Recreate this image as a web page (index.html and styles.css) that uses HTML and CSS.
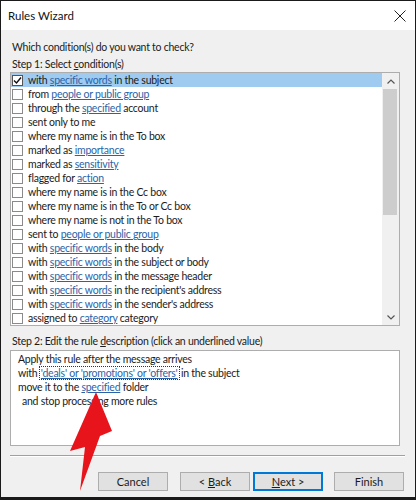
FILE: index.html
```html
<!DOCTYPE html>
<html>
<head>
<meta charset="utf-8">
<link rel="stylesheet" href="styles.css">
</head>
<body>
<div class="window">
  <div class="titlebar">
    <span class="title">Rules Wizard</span>
    <svg class="close" width="12" height="12" viewBox="0 0 12 12"><path d="M0.5 0.5 L11.5 11.5 M11.5 0.5 L0.5 11.5" stroke="#222" stroke-width="1" fill="none"/></svg>
  </div>
  <div class="body">
    <p class="prompt">Which condition(s) do you want to check?</p>
    <p class="label">Step 1: Select <u>c</u>ondition(s)</p>
    <div class="listbox">
      <ul class="items">
        <li class="item selected"><span class="cb"><svg width="9" height="9" viewBox="0 0 9 9"><path d="M1 4.5 L3.5 7 L8 1.5" stroke="#111" stroke-width="1.4" fill="none"/></svg></span><span>with <a>specific words</a> in the subject</span></li>
        <li class="item"><span class="cb"></span><span>from <a>people or public group</a></span></li>
        <li class="item"><span class="cb"></span><span>through the <a>specified</a> account</span></li>
        <li class="item"><span class="cb"></span><span>sent only to me</span></li>
        <li class="item"><span class="cb"></span><span>where my name is in the To box</span></li>
        <li class="item"><span class="cb"></span><span>marked as <a>importance</a></span></li>
        <li class="item"><span class="cb"></span><span>marked as <a>sensitivity</a></span></li>
        <li class="item"><span class="cb"></span><span>flagged for <a>action</a></span></li>
        <li class="item"><span class="cb"></span><span>where my name is in the Cc box</span></li>
        <li class="item"><span class="cb"></span><span>where my name is in the To or Cc box</span></li>
        <li class="item"><span class="cb"></span><span>where my name is not in the To box</span></li>
        <li class="item"><span class="cb"></span><span>sent to <a>people or public group</a></span></li>
        <li class="item"><span class="cb"></span><span>with <a>specific words</a> in the body</span></li>
        <li class="item"><span class="cb"></span><span>with <a>specific words</a> in the subject or body</span></li>
        <li class="item"><span class="cb"></span><span>with <a>specific words</a> in the message header</span></li>
        <li class="item"><span class="cb"></span><span>with <a>specific words</a> in the recipient's address</span></li>
        <li class="item"><span class="cb"></span><span>with <a>specific words</a> in the sender's address</span></li>
        <li class="item"><span class="cb"></span><span>assigned to <a>category</a> category</span></li>
      </ul>
      <div class="scrollbar">
        <div class="sb-btn"><svg width="8" height="5" viewBox="0 0 8 5"><path d="M0.5 4.5 L4 1 L7.5 4.5" stroke="#555" stroke-width="1.2" fill="none"/></svg></div>
        <div class="sb-track"><div class="sb-thumb"></div></div>
        <div class="sb-btn"><svg width="8" height="5" viewBox="0 0 8 5"><path d="M0.5 0.5 L4 4 L7.5 0.5" stroke="#555" stroke-width="1.2" fill="none"/></svg></div>
      </div>
    </div>
    <p class="label step2">Step 2: Edit the rule <u>d</u>escription (click an underlined value)</p>
    <div class="desc">
      <div class="line">Apply this rule after the message arrives</div>
      <div class="line">with <a class="focus">'deals' or 'promotions' or 'offers'</a> in the subject</div>
      <div class="line">move it to the <a>specified</a> folder</div>
      <div class="line indent">and stop processing more rules</div>
    </div>
    <div class="sep"></div>
    <div class="buttons">
      <button class="btn">Cancel</button>
      <button class="btn back">&lt; <u>B</u>ack</button>
      <button class="btn default"><u>N</u>ext &gt;</button>
      <button class="btn finish">Finish</button>
    </div>
  </div>
  <svg class="annot" width="416" height="500" viewBox="0 0 416 500"><polygon points="96,392 112,431 100,436 80,491 85,447 70,451" fill="#e8141c"/></svg>
</div>
</body>
</html>
```

FILE: styles.css
```css
* { box-sizing: border-box; }
html, body { margin: 0; padding: 0; background: #fff; }
body {
  font-family: "Lato", "Liberation Sans", sans-serif;
  font-size: 10.5px;
  color: #1b1b1b;
}
.window {
  position: relative;
  width: 416px;
  height: 500px;
  border: 1px solid #1a1a1a;
  border-bottom-width: 3px;
  background: #f0f0f0;
  display: flex;
  flex-direction: column;
  overflow: hidden;
}
.titlebar {
  height: 29px;
  background: #fff;
  display: flex;
  align-items: center;
  justify-content: space-between;
  padding: 0 9px 0 7px;
  flex: none;
}
.title { font-size: 11.5px; color: #111; }
.close { display: block; }
.body {
  padding: 10px 15px 0 9px;
  display: flex;
  flex-direction: column;
  letter-spacing: -0.25px;
}
p { margin: 0; }
.prompt { line-height: 14px; margin-bottom: 3px; padding-left: 2px; }
.label { line-height: 14px; margin-bottom: 1px; padding-left: 2px; }
.label.step2 { margin-top: 8px; margin-bottom: 2px; }
a { color: #2b63a8; text-decoration: underline; text-underline-offset: 1px; }
.listbox {
  width: 390px;
  height: 254px;
  border: 1px solid #adadad;
  background: #fff;
  display: flex;
}
.items {
  list-style: none;
  margin: 0;
  padding: 0;
  flex: 1;
}
.item {
  height: 14px;
  display: flex;
  align-items: center;
  padding-left: 1px;
  white-space: nowrap;
}
.item.selected { background: #9fcbf1; }
.cb {
  width: 11px;
  height: 11px;
  border: 1px solid #8a8a8a;
  background: #fff;
  margin-right: 5px;
  display: flex;
  align-items: center;
  justify-content: center;
  flex: none;
}
.selected .cb { border-color: #555; }
.cb svg { display: block; }
.scrollbar {
  width: 17px;
  display: flex;
  flex-direction: column;
  background: #f0f0f0;
  flex: none;
}
.sb-btn {
  height: 16px;
  display: flex;
  align-items: center;
  justify-content: center;
  flex: none;
}
.sb-track { flex: 1; padding: 0 2px 0 1px; }
.sb-thumb { height: 126px; background: #cdcdcd; }
.desc {
  width: 390px;
  height: 96px;
  border: 1px solid #adadad;
  background: #fff;
  padding: 1px 0 0 7px;
}
.line { height: 14px; line-height: 14px; white-space: nowrap; }
.line.indent { padding-left: 4px; }
a.focus { outline: 1px dotted #333; outline-offset: 0; padding: 0 1px; }
.sep {
  height: 2px;
  border-top: 1px solid #a0a0a0;
  border-bottom: 1px solid #fff;
  margin: 9px -5px 0 0;
}
.buttons {
  display: flex;
  justify-content: flex-end;
  margin-top: 15px;
  margin-right: -4px;
}
.btn {
  width: 70px;
  height: 19px;
  border: 1px solid #adadad;
  background: #e1e1e1;
  font-family: inherit;
  font-size: 11px;
  letter-spacing: 0;
  color: #1b1b1b;
  padding: 0;
  margin: 0;
}
.btn.back { margin-left: 12px; }
.btn.default { margin-left: 3px; border: 2px solid #0078d7; }
.btn.finish { margin-left: 11px; }
.annot { position: absolute; left: -1px; top: -1px; pointer-events: none; }
```
